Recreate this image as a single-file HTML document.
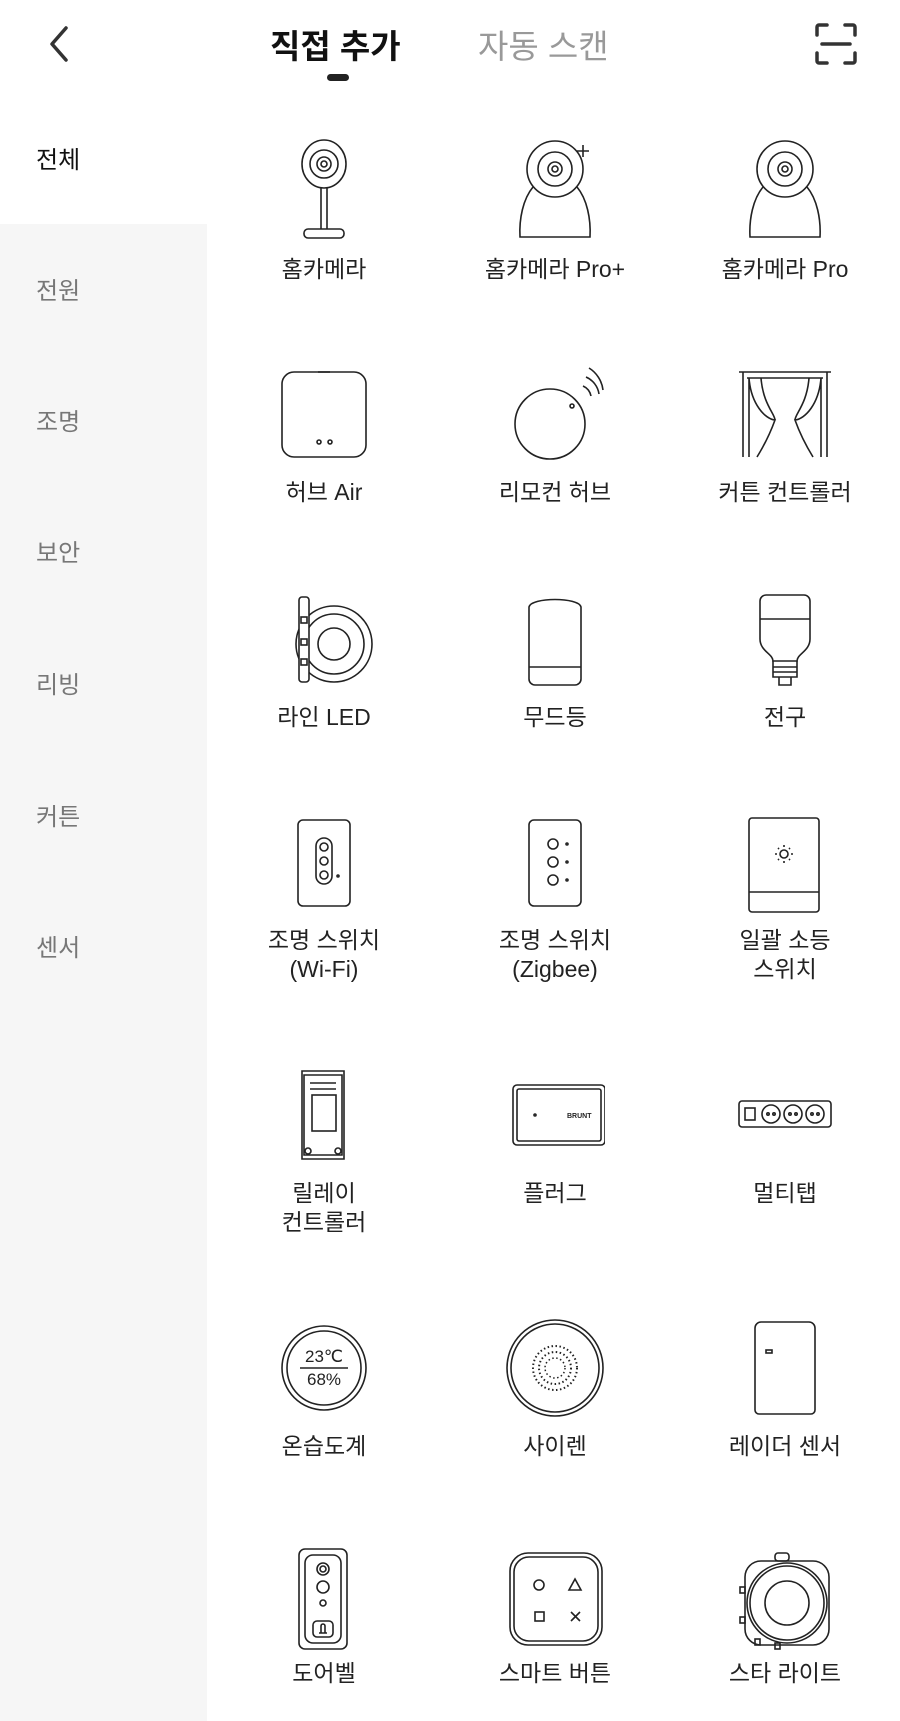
<!DOCTYPE html>
<html><head><meta charset="utf-8"><style>
*{margin:0;padding:0;box-sizing:border-box}
body{width:900px;height:1719px;background:#fff;font-family:"Liberation Sans","Noto Sans CJK KR",sans-serif;position:relative;overflow:hidden;color:#222}
.side{position:absolute;left:0;top:224px;width:207px;height:1497px;background:#f6f6f6}
.si{position:absolute;left:36px;font-size:24px;color:#777;line-height:30px}
.t{position:absolute;font-size:33px;line-height:40px}
.cell{position:absolute;width:220px;text-align:center}
.cell svg{display:block;margin:0 auto}
.lb{font-size:23px;line-height:29px;color:#222}
svg{fill:none;stroke:#222;stroke-width:1.6}
.c1{left:214px}.c2{left:445px}.c3{left:675px}
</style></head><body>
<svg style="position:absolute;left:44px;top:24px" width="30" height="40" viewBox="0 0 30 40"><path d="M22 4 L8 20 L22 36" stroke="#333" stroke-width="3.5" stroke-linecap="round" stroke-linejoin="round"/></svg>
<div class="t" style="left:270px;top:27px;font-weight:bold;color:#111">직접 추가</div>
<div style="position:absolute;left:327px;top:74px;width:22px;height:7px;border-radius:4px;background:#222"></div>
<div class="t" style="left:478px;top:27px;color:#999">자동 스캔</div>
<svg style="position:absolute;left:814px;top:22px" width="44" height="44" viewBox="0 0 44 44"><path d="M3 13 V5 a2 2 0 0 1 2-2 H13 M31 3 H39 a2 2 0 0 1 2 2 V13 M41 31 V39 a2 2 0 0 1-2 2 H31 M13 41 H5 a2 2 0 0 1-2-2 V31 M8 22 H36" stroke="#333" stroke-width="3.5" stroke-linecap="round"/></svg>

<div class="side"></div>
<div class="si" style="top:146px;color:#111">전체</div>
<div class="si" style="top:277px">전원</div>
<div class="si" style="top:408px">조명</div>
<div class="si" style="top:539px">보안</div>
<div class="si" style="top:671px">리빙</div>
<div class="si" style="top:803px">커튼</div>
<div class="si" style="top:934px">센서</div>

<!-- row1 -->
<div class="cell c1" style="top:139px"><svg width="100" height="104" viewBox="0 0 100 104"><ellipse cx="50" cy="25" rx="22" ry="24"/><circle cx="50" cy="25" r="14"/><circle cx="50" cy="25" r="7"/><circle cx="50" cy="25" r="3"/><path d="M47 48 L47 90 M53 48 L53 90"/><rect x="30" y="90" width="40" height="9" rx="4"/></svg><div class="lb" style="margin-top:12px">홈카메라</div></div>
<div class="cell c2" style="top:139px"><svg width="100" height="104" viewBox="0 0 100 104"><circle cx="50" cy="30" r="28"/><circle cx="50" cy="30" r="17"/><circle cx="50" cy="30" r="7"/><circle cx="50" cy="30" r="3"/><path d="M28 48 C18 60 14 80 15 98 H85 C86 80 82 60 72 48"/><path d="M78 6 V18 M72 12 H84"/></svg><div class="lb" style="margin-top:12px">홈카메라 Pro+</div></div>
<div class="cell c3" style="top:139px"><svg width="100" height="104" viewBox="0 0 100 104"><circle cx="50" cy="30" r="28"/><circle cx="50" cy="30" r="17"/><circle cx="50" cy="30" r="7"/><circle cx="50" cy="30" r="3"/><path d="M28 48 C18 60 14 80 15 98 H85 C86 80 82 60 72 48"/></svg><div class="lb" style="margin-top:12px">홈카메라 Pro</div></div>
<!-- row2 -->
<div class="cell c1" style="top:364px"><svg width="100" height="104" viewBox="0 0 100 104"><rect x="8" y="8" width="84" height="85" rx="12"/><circle cx="45" cy="78" r="2"/><circle cx="56" cy="78" r="2"/><path d="M44 8 H56"/></svg><div class="lb" style="margin-top:10px">허브 Air</div></div>
<div class="cell c2" style="top:364px"><svg width="100" height="104" viewBox="0 0 100 104"><circle cx="45" cy="60" r="35"/><circle cx="67" cy="42" r="2"/><path d="M78 22 a14 14 0 0 1 8 10 M81 13 a22 22 0 0 1 13 17 M84 4 a30 30 0 0 1 14 22"/></svg><div class="lb" style="margin-top:10px">리모컨 허브</div></div>
<div class="cell c3" style="top:364px"><svg width="100" height="104" viewBox="0 0 100 104"><path d="M4 8 H96 M8 8 V93 M92 8 V93 M12 14 H88"/><path d="M14 14 C16 40 30 55 40 56 C35 70 30 80 22 93 M26 14 C28 40 40 50 40 56 M86 14 C84 40 70 55 60 56 C65 70 70 80 78 93 M74 14 C72 40 60 50 60 56 M14 14 V93 M86 14 V93"/></svg><div class="lb" style="margin-top:10px">커튼 컨트롤러</div></div>
<!-- row3 -->
<div class="cell c1" style="top:589px"><svg width="100" height="104" viewBox="0 0 100 104"><circle cx="60" cy="55" r="38"/><circle cx="60" cy="55" r="30"/><circle cx="60" cy="55" r="16"/><rect x="25" y="8" width="10" height="85" rx="3" fill="#fff"/><rect x="27" y="28" width="6" height="6"/><rect x="27" y="50" width="6" height="6"/><rect x="27" y="70" width="6" height="6"/></svg><div class="lb" style="margin-top:10px">라인 LED</div></div>
<div class="cell c2" style="top:589px"><svg width="100" height="104" viewBox="0 0 100 104"><path d="M24 18 C26 8 74 8 76 18 V90 a6 6 0 0 1 -6 6 H30 a6 6 0 0 1 -6 -6 Z"/><path d="M24 78 H76"/></svg><div class="lb" style="margin-top:10px">무드등</div></div>
<div class="cell c3" style="top:589px"><svg width="100" height="104" viewBox="0 0 100 104"><path d="M25 12 a6 6 0 0 1 6 -6 H69 a6 6 0 0 1 6 6 V50 C75 62 62 65 62 72 H38 C38 65 25 62 25 50 Z"/><path d="M25 30 H75 M38 72 V88 H62 V72 M38 78 H62 M38 83 H62 M44 88 V96 H56 V88"/></svg><div class="lb" style="margin-top:10px">전구</div></div>
<!-- row4 -->
<div class="cell c1" style="top:814px"><svg width="100" height="104" viewBox="0 0 100 104"><rect x="24" y="6" width="52" height="86" rx="5"/><rect x="42" y="24" width="16" height="46" rx="8"/><circle cx="50" cy="33" r="4"/><circle cx="50" cy="47" r="4"/><circle cx="50" cy="61" r="4"/><circle cx="64" cy="62" r="1"/></svg><div class="lb" style="margin-top:8px">조명 스위치<br>(Wi-Fi)</div></div>
<div class="cell c2" style="top:814px"><svg width="100" height="104" viewBox="0 0 100 104"><rect x="24" y="6" width="52" height="86" rx="5"/><circle cx="48" cy="30" r="5"/><circle cx="48" cy="48" r="5"/><circle cx="48" cy="66" r="5"/><circle cx="62" cy="30" r="1"/><circle cx="62" cy="48" r="1"/><circle cx="62" cy="66" r="1"/></svg><div class="lb" style="margin-top:8px">조명 스위치<br>(Zigbee)</div></div>
<div class="cell c3" style="top:814px"><svg width="100" height="104" viewBox="0 0 100 104"><rect x="14" y="4" width="70" height="94" rx="3"/><path d="M14 78 H84"/><circle cx="49" cy="40" r="4"/><path d="M49 31 V33 M49 47 V49 M40 40 H42 M56 40 H58 M43 34 L44 35 M55 34 L54 35 M43 46 L44 45 M55 46 L54 45"/></svg><div class="lb" style="margin-top:8px">일괄 소등<br>스위치</div></div>
<!-- row5 -->
<div class="cell c1" style="top:1063px"><svg width="100" height="104" viewBox="0 0 100 104"><path d="M28 8 H70 V96 H28 Z M30 12 H68 V92 H30 Z"/><rect x="38" y="32" width="24" height="36"/><path d="M36 20 H62 M36 26 H62"/><circle cx="34" cy="88" r="3"/><circle cx="64" cy="88" r="3"/></svg><div class="lb" style="margin-top:12px">릴레이<br>컨트롤러</div></div>
<div class="cell c2" style="top:1063px"><svg width="100" height="104" viewBox="0 0 100 104"><rect x="8" y="22" width="92" height="60" rx="4"/><rect x="12" y="26" width="84" height="52" rx="2"/><text x="62" y="55" font-size="7" fill="#222" stroke="none" font-weight="bold" font-family="Liberation Sans">BRUNT</text><circle cx="30" cy="52" r="1"/></svg><div class="lb" style="margin-top:12px">플러그</div></div>
<div class="cell c3" style="top:1063px"><svg width="100" height="104" viewBox="0 0 100 104"><rect x="4" y="38" width="92" height="26" rx="3"/><rect x="10" y="45" width="10" height="12"/><circle cx="36" cy="51" r="9"/><circle cx="58" cy="51" r="9"/><circle cx="80" cy="51" r="9"/><circle cx="33" cy="51" r="1.2"/><circle cx="39" cy="51" r="1.2"/><circle cx="55" cy="51" r="1.2"/><circle cx="61" cy="51" r="1.2"/><circle cx="77" cy="51" r="1.2"/><circle cx="83" cy="51" r="1.2"/></svg><div class="lb" style="margin-top:12px">멀티탭</div></div>
<!-- row6 -->
<div class="cell c1" style="top:1318px"><svg width="100" height="104" viewBox="0 0 100 104"><circle cx="50" cy="50" r="42"/><circle cx="50" cy="50" r="37"/><path d="M26 50 H74"/><text x="50" y="44" font-size="17" text-anchor="middle" fill="#222" stroke="none" font-family="Liberation Sans">23℃</text><text x="50" y="67" font-size="17" text-anchor="middle" fill="#222" stroke="none" font-family="Liberation Sans">68%</text></svg><div class="lb" style="margin-top:10px">온습도계</div></div>
<div class="cell c2" style="top:1318px"><svg width="100" height="104" viewBox="0 0 100 104"><circle cx="50" cy="50" r="48"/><circle cx="50" cy="50" r="44"/><circle cx="50" cy="50" r="22" stroke-dasharray="1.5 2.5" stroke-width="2"/><circle cx="50" cy="50" r="16" stroke-dasharray="1.5 2.5" stroke-width="2"/><circle cx="50" cy="50" r="10" stroke-dasharray="1.5 2.5" stroke-width="1.5"/></svg><div class="lb" style="margin-top:10px">사이렌</div></div>
<div class="cell c3" style="top:1318px"><svg width="100" height="104" viewBox="0 0 100 104"><path d="M20 10 a6 6 0 0 1 6 -6 H74 a6 6 0 0 1 6 6 V92 a4 4 0 0 1 -4 4 H24 a4 4 0 0 1 -4 -4 Z"/><rect x="31" y="32" width="6" height="3"/></svg><div class="lb" style="margin-top:10px">레이더 센서</div></div>
<!-- row7 -->
<div class="cell c1" style="top:1547px"><svg width="100" height="104" viewBox="0 0 100 104"><rect x="25" y="2" width="48" height="100" rx="6"/><rect x="31" y="8" width="36" height="88" rx="8"/><circle cx="49" cy="22" r="6"/><circle cx="49" cy="22" r="3"/><circle cx="49" cy="40" r="6"/><circle cx="49" cy="56" r="3"/><rect x="39" y="74" width="20" height="16" rx="4"/><path d="M45 86 H53 M47 86 V79 a2 2 0 0 1 4 0 V86"/></svg><div class="lb" style="margin-top:8px">도어벨</div></div>
<div class="cell c2" style="top:1547px"><svg width="100" height="104" viewBox="0 0 100 104"><rect x="5" y="6" width="92" height="92" rx="18"/><rect x="9" y="10" width="84" height="84" rx="15"/><circle cx="34" cy="38" r="5"/><path d="M70 32 L76 43 H64 Z"/><rect x="30" y="65" width="9" height="9"/><path d="M66 65 L75 74 M75 65 L66 74"/></svg><div class="lb" style="margin-top:8px">스마트 버튼</div></div>
<div class="cell c3" style="top:1547px"><svg width="100" height="104" viewBox="0 0 100 104"><rect x="10" y="14" width="84" height="84" rx="16"/><circle cx="52" cy="56" r="40"/><circle cx="52" cy="56" r="37"/><circle cx="52" cy="56" r="22"/><rect x="40" y="6" width="14" height="8" rx="3"/><rect x="5" y="40" width="5" height="6"/><rect x="5" y="70" width="5" height="6"/><rect x="20" y="92" width="5" height="6"/><rect x="40" y="96" width="5" height="6"/></svg><div class="lb" style="margin-top:8px">스타 라이트</div></div>
</body></html>
